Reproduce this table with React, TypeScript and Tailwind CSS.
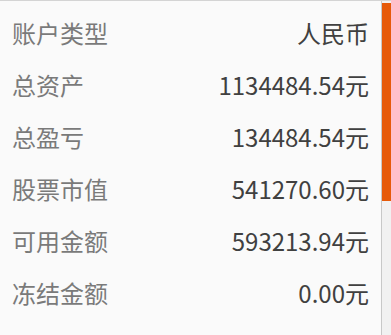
import React from "react";

const rows: [string, string][] = [
  ["账户类型", "人民币"],
  ["总资产", "1134484.54元"],
  ["总盈亏", "134484.54元"],
  ["股票市值", "541270.60元"],
  ["可用金额", "593213.94元"],
  ["冻结金额", "0.00元"],
];

export default function App() {
  return (
    <div
      className="flex h-[335px] w-[391px] overflow-hidden border-t border-[#d4d4d4] bg-[#fafafa]"
      style={{ fontFamily: '"Noto Sans CJK SC", "Noto Sans", sans-serif' }}
    >
      <div className="flex flex-1 flex-col pl-[12px] pr-[12px] pt-[6px]">
        {rows.map(([k, v]) => (
          <div key={k} className="flex h-[52px] items-center justify-between text-[24px] leading-none">
            <span className="text-[#7a7a7a]">{k}</span>
            <span className="text-[#404040]">{v}</span>
          </div>
        ))}
      </div>
      <div className="flex w-[10px] flex-col border-l border-[#c8c8c8] bg-[#f1f1f1] pt-[2px]">
        <div className="h-[198px] bg-[#e65a0a]" />
      </div>
    </div>
  );
}
